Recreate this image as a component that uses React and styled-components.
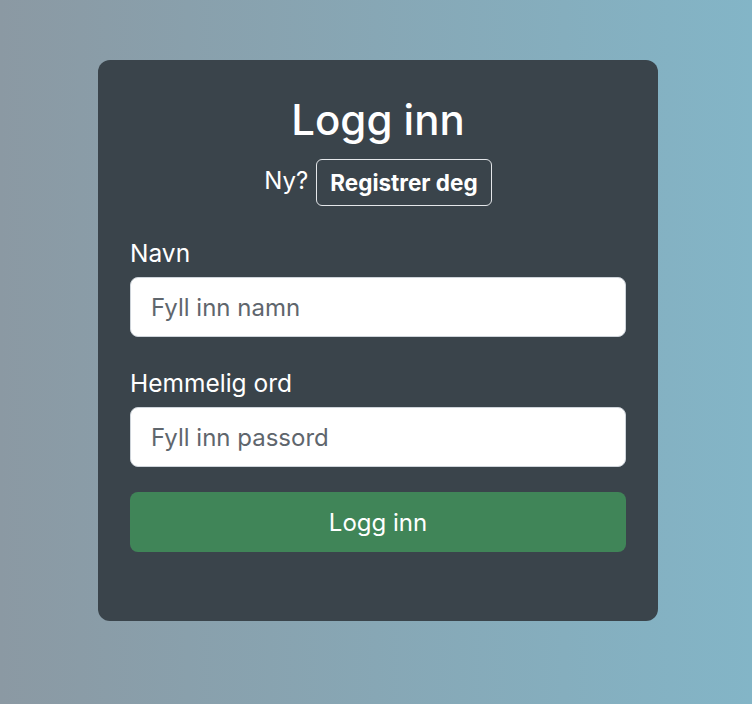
import React from 'react';
import styled, { createGlobalStyle } from 'styled-components';

const GlobalStyle = createGlobalStyle`
  html, body {
    margin: 0;
    padding: 0;
  }
  body {
    font-family: Inter, 'Noto Sans', sans-serif;
    min-height: 704px;
    background: linear-gradient(90deg, #8b99a3 0%, #83b5c7 100%);
  }
`;

const Page = styled.div`
  display: flex;
  justify-content: center;
  padding: 60px 0 0 4px;
`;

const Card = styled.form`
  box-sizing: border-box;
  width: 560px;
  height: 561px;
  background: #3a444b;
  border-radius: 12px;
  padding: 34px 32px 32px;
  color: #fff;
  display: flex;
  flex-direction: column;
`;

const Title = styled.h1`
  margin: 0;
  font-size: 42px;
  font-weight: 500;
  line-height: 52px;
  text-align: center;
`;

const SignupRow = styled.div`
  display: flex;
  justify-content: center;
  align-items: center;
  gap: 8px;
  margin-top: 13px;
  font-size: 24px;
`;

const NewText = styled.span`
  margin-top: -4px;
`;

const OutlineButton = styled.button`
  box-sizing: border-box;
  height: 47px;
  padding: 0 13px;
  background: transparent;
  border: 1px solid #e4e7ea;
  border-radius: 6px;
  color: #fff;
  font-family: Inter, sans-serif;
  font-size: 22.5px;
  font-weight: 700;
`;

const Field = styled.div`
  display: flex;
  flex-direction: column;
  margin-top: ${p => p.$top}px;
`;

const Label = styled.label`
  font-size: 24.5px;
  line-height: 36px;
  margin-bottom: 6px;
`;

const Input = styled.input`
  box-sizing: border-box;
  height: 60px;
  width: 100%;
  padding: 0 20px;
  border: 1px solid #ced4da;
  border-radius: 8px;
  background: #fff;
  font-family: Inter, sans-serif;
  font-size: 24px;
  color: #212529;
  &::placeholder {
    color: #5f666d;
  }
`;

const SubmitButton = styled.button`
  box-sizing: border-box;
  margin-top: 25px;
  height: 60px;
  width: 100%;
  border: none;
  border-radius: 8px;
  background: #408558;
  color: #fff;
  font-family: Inter, sans-serif;
  font-size: 24px;
  font-weight: 400;
`;

export default function App() {
  return (
    <>
      <GlobalStyle />
      <Page>
        <Card onSubmit={e => e.preventDefault()}>
          <Title>Logg inn</Title>
          <SignupRow>
            <NewText>Ny?</NewText>
            <OutlineButton type="button">Registrer deg</OutlineButton>
          </SignupRow>
          <Field $top={29}>
            <Label>Navn</Label>
            <Input placeholder="Fyll inn namn" />
          </Field>
          <Field $top={28}>
            <Label>Hemmelig ord</Label>
            <Input type="password" placeholder="Fyll inn passord" />
          </Field>
          <SubmitButton type="submit">Logg inn</SubmitButton>
        </Card>
      </Page>
    </>
  );
}
